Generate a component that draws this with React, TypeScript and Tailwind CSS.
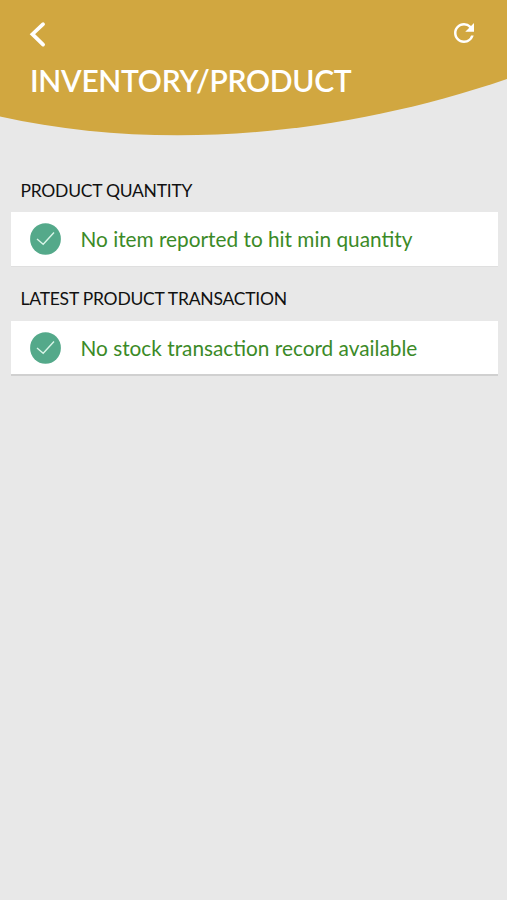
import { MdRefresh } from "react-icons/md";

const sections = [
  {
    title: "PRODUCT QUANTITY",
    message: "No item reported to hit min quantity",
    titleClass: "pt-[1px] tracking-[-0.26px]",
    cardClass: "h-[54px] shadow-[0_1px_0_#dfdfdf]",
  },
  {
    title: "LATEST PRODUCT TRANSACTION",
    message: "No stock transaction record available",
    titleClass: "tracking-[-0.23px]",
    cardClass: "h-[53px] pt-[1px] shadow-[0_2px_0_#d0d0d0]",
  },
];

function Header() {
  return (
    <header className="relative h-[137px] text-white">
      <svg
        className="absolute inset-0 h-full w-full"
        viewBox="0 0 507 137"
        preserveAspectRatio="none"
      >
        <path d="M0 0H507V79C340 136 160 152 0 116.5Z" fill="#d1a740" />
      </svg>
      <div className="relative flex h-[64px] items-center justify-between pr-[28px] pl-[28px] pt-[2px]">
        <button aria-label="Back" className="pt-[1px]">
          <svg width="18" height="28" viewBox="0 0 18 28" fill="none">
            <path
              d="M15.1 4.2L4.4 14.2L15.1 24.6"
              stroke="white"
              strokeWidth="3.7"
              strokeLinecap="round"
            />
          </svg>
        </button>
        <button aria-label="Refresh">
          <MdRefresh size={30} />
        </button>
      </div>
      <h1 className="relative -mt-px pl-[30px] text-[30px] leading-[34px] font-semibold tracking-[-0.3px] whitespace-nowrap">
        INVENTORY/PRODUCT
      </h1>
    </header>
  );
}

function StatusCard({
  message,
  className,
}: {
  message: string;
  className: string;
}) {
  return (
    <div className={`flex items-center bg-white pl-[19px] ${className}`}>
      <svg width="31" height="32" viewBox="0 0 31 32" fill="none">
        <ellipse cx="15.5" cy="16" rx="15.4" ry="15.8" fill="#54a98a" />
        <path d="M7 16L13.2 21.2L24 9.6" stroke="#d9f5e8" strokeWidth="1.4" />
      </svg>
      <p className="ml-[19.5px] text-[20.8px] whitespace-nowrap text-[#3b8a27]">
        {message}
      </p>
    </div>
  );
}

export default function App() {
  return (
    <div className="min-h-screen bg-[#e8e8e8] font-['Lato',sans-serif]">
      <Header />
      <main className="flex flex-col gap-[20px] px-[11px] pr-[9px] pt-[40px]">
        {sections.map((section) => (
          <section key={section.title}>
            <h2
              className={`mb-[9px] h-[26px] pl-[9.5px] text-[17.5px] leading-[26px] text-[#111] ${section.titleClass}`}
            >
              {section.title}
            </h2>
            <StatusCard
              message={section.message}
              className={section.cardClass}
            />
          </section>
        ))}
      </main>
    </div>
  );
}
